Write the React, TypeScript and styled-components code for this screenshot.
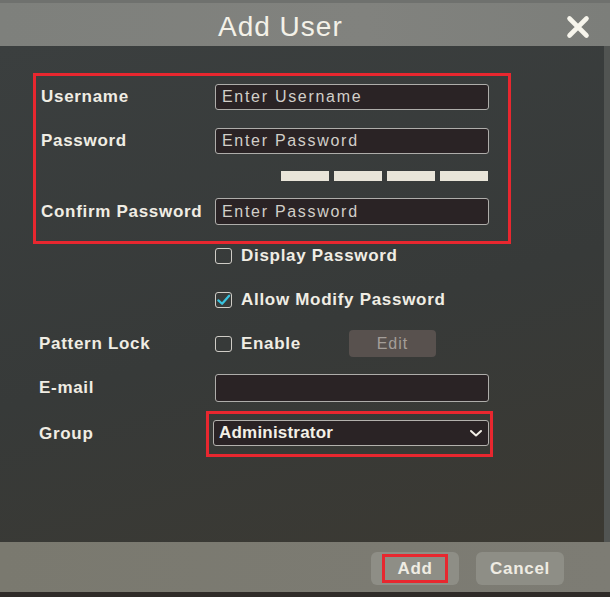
import styled, { createGlobalStyle } from "styled-components";

const GlobalStyle = createGlobalStyle`
  body {
    margin: 0;
    background: #2e2b28;
    font-family: "Liberation Sans", Arial, sans-serif;
  }
`;

const Window = styled.div`
  width: 610px;
  height: 597px;
  display: flex;
  flex-direction: column;
  overflow: hidden;
`;

const TitleBar = styled.div`
  height: 46px;
  flex-shrink: 0;
  display: flex;
  align-items: center;
  background: linear-gradient(90deg, #7e807c 0%, #81827e 60%, #7c7e7a 100%);
  border-top: 3px solid #6f716e;
  box-sizing: border-box;
  padding: 5px 19px 0 0;
`;

const Title = styled.h1`
  margin: 0 0 0 218px;
  font-size: 28px;
  font-weight: normal;
  letter-spacing: 1px;
  color: #f3f1e8;
`;

const CloseButton = styled.button`
  margin-left: auto;
  width: 26px;
  height: 26px;
  padding: 0;
  border: none;
  background: none;
  display: flex;
  align-items: center;
  justify-content: center;
`;

const Body = styled.div`
  flex: 1;
  padding: 27px 0 0 33px;
  background: linear-gradient(165deg, #3b3f3f 0%, #373a39 55%, #3b3932 100%);
  border-right: 6px solid #515452;
`;

const Highlight = styled.div<{ $inset?: boolean }>`
  border: 3px solid #e8272f;
  box-sizing: border-box;
  ${(p) =>
    p.$inset
      ? `
    margin-left: -9px;
    width: 287px;
    padding: 6px 1px 8px 4px;
  `
      : `
    width: 478px;
    padding: 8px 19px 16px 5px;
  `}
`;

const Row = styled.div<{ $top?: number; $label?: number }>`
  display: grid;
  grid-template-columns: ${(p) => p.$label ?? 176}px 1fr;
  align-items: center;
  margin-top: ${(p) => p.$top ?? 0}px;
`;

const Label = styled.span`
  font-size: 17px;
  font-weight: bold;
  letter-spacing: 0.7px;
  color: #f0ede4;
`;

const TextInput = styled.input`
  width: 274px;
  height: ${(p) => p.height ?? 26}px;
  box-sizing: border-box;
  border: 1.5px solid #aeadaa;
  border-radius: 3px;
  background: #2a2325;
  padding: 0 6px;
  font-family: "Liberation Sans", Arial, sans-serif;
  font-size: 16px;
  letter-spacing: 1.7px;
  color: #f0ede4;
  outline: none;
  &::placeholder {
    color: #d2cfc9;
  }
`;

const Strength = styled.div`
  margin: 17px 0 0 240px;
  display: flex;
  gap: 5px;
`;

const StrengthBar = styled.span`
  width: 48px;
  height: 10px;
  background: #e9e5d9;
`;

const Options = styled.div`
  padding-left: 6px;
`;

const CheckLine = styled.label`
  display: flex;
  align-items: center;
  gap: 9px;
  height: 20px;
`;

const Box = styled.span`
  width: 17px;
  height: 16px;
  box-sizing: border-box;
  border: 1.5px solid #cfccc6;
  border-radius: 3px;
  display: flex;
  align-items: center;
  justify-content: center;
`;

const LockControls = styled.div`
  display: flex;
  align-items: center;
`;

const EditButton = styled.button`
  margin-left: 48px;
  width: 87px;
  height: 27px;
  border: none;
  border-radius: 4px;
  background: #58514e;
  font-family: "Liberation Sans", Arial, sans-serif;
  font-size: 16px;
  letter-spacing: 1px;
  color: #a49e99;
`;

const Select = styled.div`
  height: 26px;
  box-sizing: border-box;
  border: 1.5px solid #b3b1ad;
  border-radius: 3px;
  background: #2a2325;
  padding: 0 5px;
  display: flex;
  align-items: center;
  justify-content: space-between;
`;

const SelectValue = styled.span`
  font-size: 17px;
  font-weight: bold;
  letter-spacing: 0.2px;
  color: #f3f0e7;
`;

const Footer = styled.div`
  height: 50px;
  flex-shrink: 0;
  box-sizing: border-box;
  display: flex;
  align-items: center;
  justify-content: flex-end;
  gap: 17px;
  padding: 3px 46px 0 0;
  background: linear-gradient(90deg, #7a796f 0%, #7d7c74 100%);
`;

const FooterButton = styled.button`
  width: 88px;
  height: 33px;
  border: none;
  border-radius: 6px;
  background: #8e8e86;
  display: flex;
  align-items: center;
  justify-content: center;
  font-family: "Liberation Sans", Arial, sans-serif;
  font-size: 17px;
  font-weight: bold;
  letter-spacing: 0.7px;
  color: #efece3;
`;

const Marked = styled.span`
  width: 66px;
  height: 29px;
  box-sizing: border-box;
  border: 3px solid #e8272f;
  display: flex;
  align-items: center;
  justify-content: center;
`;

const BottomStrip = styled.div`
  height: 5px;
  flex-shrink: 0;
  background: #2f2b28;
`;

function Checkbox({ checked, label }: { checked?: boolean; label: string }) {
  return (
    <CheckLine>
      <Box>
        {checked && (
          <svg width="16" height="14" viewBox="0 0 16 14">
            <path d="M2.5 7.5 L6.5 11 L14 2.5" fill="none" stroke="#39c3df" strokeWidth="2.4" strokeLinecap="round" strokeLinejoin="round" />
          </svg>
        )}
      </Box>
      <Label>{label}</Label>
    </CheckLine>
  );
}

export default function App() {
  return (
    <>
      <GlobalStyle />
      <Window>
        <TitleBar>
          <Title>Add User</Title>
          <CloseButton>
            <svg width="24" height="24" viewBox="0 0 24 24">
              <path d="M3.5 3.5 L20.5 20.5 M20.5 3.5 L3.5 20.5" stroke="#f7f5ec" strokeWidth="4.6" strokeLinecap="round" />
            </svg>
          </CloseButton>
        </TitleBar>

        <Body>
          <Highlight>
            <Row $label={174}>
              <Label>Username</Label>
              <TextInput placeholder="Enter Username" />
            </Row>
            <Row $label={174} $top={18}>
              <Label>Password</Label>
              <TextInput type="password" placeholder="Enter Password" />
            </Row>
            <Strength>
              <StrengthBar />
              <StrengthBar />
              <StrengthBar />
              <StrengthBar />
            </Strength>
            <Row $label={174} $top={17}>
              <Label>Confirm Password</Label>
              <TextInput type="password" placeholder="Enter Password" height={27} />
            </Row>
          </Highlight>

          <Options>
            <Row $top={2}>
              <span />
              <Checkbox label="Display Password" />
            </Row>
            <Row $top={24}>
              <span />
              <Checkbox checked label="Allow Modify Password" />
            </Row>
            <Row $top={20}>
              <Label>Pattern Lock</Label>
              <LockControls>
                <Checkbox label="Enable" />
                <EditButton>Edit</EditButton>
              </LockControls>
            </Row>
            <Row $top={17}>
              <Label>E-mail</Label>
              <TextInput height={28} />
            </Row>
            <Row $top={9}>
              <Label>Group</Label>
              <Highlight $inset>
                <Select>
                  <SelectValue>Administrator</SelectValue>
                  <svg width="14" height="10" viewBox="0 0 14 10">
                    <path d="M2 3 L7 7.5 L12 3" fill="none" stroke="#f3f0e7" strokeWidth="2" strokeLinecap="round" strokeLinejoin="round" />
                  </svg>
                </Select>
              </Highlight>
            </Row>
          </Options>
        </Body>

        <Footer>
          <FooterButton>
            <Marked>Add</Marked>
          </FooterButton>
          <FooterButton>Cancel</FooterButton>
        </Footer>
        <BottomStrip />
      </Window>
    </>
  );
}
